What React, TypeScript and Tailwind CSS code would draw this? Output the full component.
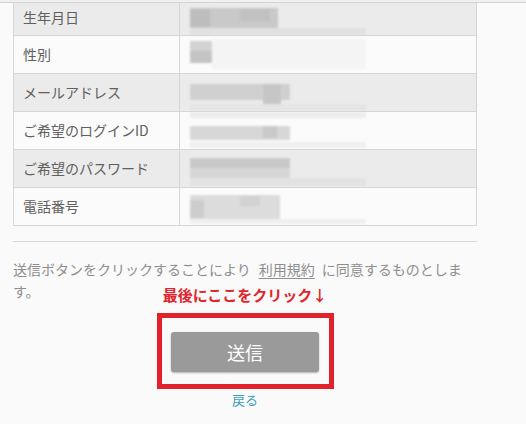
import React from 'react';

type Block = { x: number; y: number; w: number; h: number; c: string };

interface FieldRow {
  label: string;
  shaded: boolean;
  blocks: Block[];
}

const rows: FieldRow[] = [
  {
    label: '生年月日',
    shaded: true,
    blocks: [
      { x: 10, y: 5, w: 88, h: 20, c: '#c9c9c9' },
      { x: 10, y: 6, w: 20, h: 18, c: '#bdbdbd' },
      { x: 60, y: 6, w: 30, h: 12, c: '#c1c1c1' },
      { x: 10, y: 25, w: 176, h: 7, c: '#e1e1e1' },
    ],
  },
  {
    label: '性別',
    shaded: false,
    blocks: [
      { x: 32, y: 3, w: 154, h: 30, c: '#f4f4f4' },
      { x: 10, y: 5, w: 22, h: 10, c: '#d2d2d2' },
      { x: 10, y: 15, w: 22, h: 12, c: '#c4c4c4' },
    ],
  },
  {
    label: 'メールアドレス',
    shaded: true,
    blocks: [
      { x: 10, y: 10, w: 100, h: 16, c: '#d0d0d0' },
      { x: 83, y: 10, w: 18, h: 24, c: '#c6c6c6' },
      { x: 10, y: 30, w: 176, h: 7, c: '#e5e5e5' },
    ],
  },
  {
    label: 'ご希望のログインID',
    shaded: false,
    blocks: [
      { x: 10, y: 0, w: 176, h: 6, c: '#ededed' },
      { x: 10, y: 14, w: 100, h: 14, c: '#d7d7d7' },
      { x: 83, y: 14, w: 14, h: 12, c: '#c9c9c9' },
      { x: 10, y: 30, w: 176, h: 6, c: '#efefef' },
    ],
  },
  {
    label: 'ご希望のパスワード',
    shaded: true,
    blocks: [
      { x: 10, y: 8, w: 100, h: 10, c: '#c9c9c9' },
      { x: 10, y: 18, w: 100, h: 10, c: '#d6d6d6' },
      { x: 10, y: 28, w: 176, h: 8, c: '#e2e2e2' },
    ],
  },
  {
    label: '電話番号',
    shaded: false,
    blocks: [
      { x: 10, y: 7, w: 90, h: 24, c: '#dcdcdc' },
      { x: 10, y: 12, w: 14, h: 18, c: '#cdcdcd' },
      { x: 60, y: 8, w: 20, h: 10, c: '#d2d2d2' },
      { x: 10, y: 31, w: 176, h: 5, c: '#f0f0f0' },
    ],
  },
];

function Mosaic({ id, blocks, height }: { id: string; blocks: Block[]; height: number }) {
  return (
    <svg width="296" height={height} viewBox={`0 0 296 ${height}`} className="block">
      <defs>
        <filter id={id} x="-10%" y="-30%" width="120%" height="160%">
          <feGaussianBlur stdDeviation="1.3" />
        </filter>
      </defs>
      <g filter={`url(#${id})`}>
        {blocks.map((b, i) => (
          <rect key={i} x={b.x} y={b.y} width={b.w} height={b.h} fill={b.c} />
        ))}
      </g>
    </svg>
  );
}

export default function App() {
  return (
    <div
      className="w-[526px] h-[424px] overflow-hidden bg-[#fafafa] text-[#606060]"
      style={{ fontFamily: '"Noto Sans CJK JP", "Noto Sans", sans-serif' }}
    >
      <div className="h-[3px] border-b border-[#d3d3d3] bg-[#f0f0f0]" />

      <div className="ml-[13px] w-[464px]">
        <div className="border-l border-r border-[#d6d6d6]">
          {rows.map((row, i) => {
            const h = i === 0 ? 32 : 37;
            return (
              <div
                key={row.label}
                className={`flex border-b border-[#d6d6d6] ${row.shaded ? 'bg-[#ebebeb]' : 'bg-[#fbfbfb]'}`}
              >
                <div
                  className={`w-[166px] shrink-0 border-r border-[#d6d6d6] flex items-center pl-[9px] text-[14px] ${
                    i === 0 ? 'h-[32px] pb-[4px]' : 'h-[37px]'
                  }`}
                >
                  {row.label}
                </div>
                <div className="flex-1">
                  <Mosaic id={`mz${i}`} blocks={row.blocks} height={h} />
                </div>
              </div>
            );
          })}
        </div>

        <div className="mt-[15px] border-t border-[#d9d9d9]" />

        <p className="mt-[16px] text-[14px] leading-[22px] text-[#8e8e8e]">
          送信ボタンをクリックすることにより
          <span className="ml-[8px] mr-[7px] underline underline-offset-[3px]">利用規約</span>
          に同意するものとします。
        </p>

        <div className="relative flex flex-col items-center">
          <div className="absolute top-[-17px] left-0 right-0 text-center text-[15px] leading-[20px] font-bold text-[#e1252c]">
            最後にここをクリック↓
          </div>

          <div className="relative mt-[30px]">
            <button className="w-[148px] h-[40px] rounded-[3px] bg-[#9a9a9a] text-white text-[18px] shadow-[0_1px_2px_rgba(0,0,0,0.3)]">
              送信
            </button>
            <div className="absolute left-[-14px] top-[-19px] w-[177px] h-[76px] border-[5px] border-[#e3212b] pointer-events-none" />
          </div>

          <a className="mt-[18px] text-[13px] leading-[20px] text-[#3b9ebd]">戻る</a>
        </div>
      </div>
    </div>
  );
}
